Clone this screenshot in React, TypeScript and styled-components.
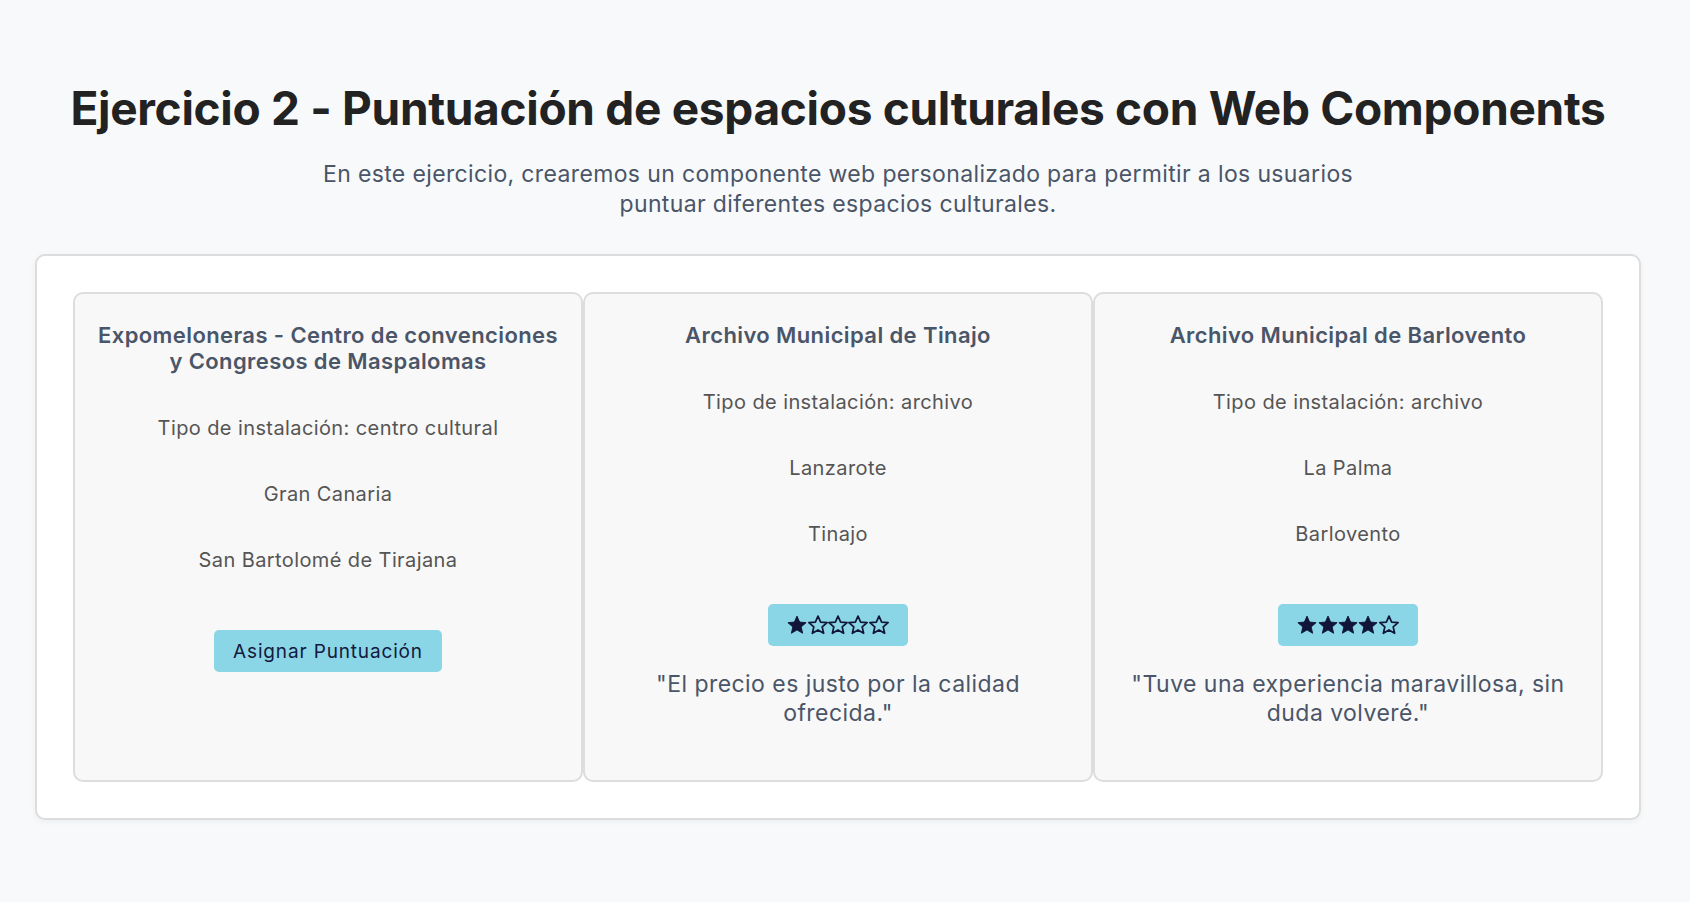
import { createGlobalStyle, styled } from "styled-components";

type Space = {
  name: string;
  type: string;
  island: string;
  town: string;
  rating?: number;
  comment?: string;
};

const spaces: Space[] = [
  {
    name: "Expomeloneras - Centro de convenciones y Congresos de Maspalomas",
    type: "centro cultural",
    island: "Gran Canaria",
    town: "San Bartolomé de Tirajana",
  },
  {
    name: "Archivo Municipal de Tinajo",
    type: "archivo",
    island: "Lanzarote",
    town: "Tinajo",
    rating: 1,
    comment: "El precio es justo por la calidad ofrecida.",
  },
  {
    name: "Archivo Municipal de Barlovento",
    type: "archivo",
    island: "La Palma",
    town: "Barlovento",
    rating: 4,
    comment: "Tuve una experiencia maravillosa, sin duda volveré.",
  },
];

function Star({ filled }: { filled: boolean }) {
  return (
    <StarSvg viewBox="1 1 22 22" width="20" height="20">
      <path
        d="M12 2.2l2.9 6.6 7.1.6-5.4 4.7 1.6 7-6.2-3.7-6.2 3.7 1.6-7L2 9.4l7.1-.6z"
        fill={filled ? "#111638" : "none"}
        stroke="#111638"
        strokeWidth={filled ? 1 : 1.9}
        strokeLinejoin="round"
      />
    </StarSvg>
  );
}

function Card({ space }: { space: Space }) {
  return (
    <CardBox>
      <CardTitle>{space.name}</CardTitle>
      <Details>
        <Detail>Tipo de instalación: {space.type}</Detail>
        <Detail>{space.island}</Detail>
        <Detail>{space.town}</Detail>
      </Details>
      {space.rating ? (
        <>
          <RateButton aria-label={`${space.rating} de 5`} $stars>
            {[1, 2, 3, 4, 5].map((n) => (
              <Star key={n} filled={n <= (space.rating ?? 0)} />
            ))}
          </RateButton>
          <Quote>"{space.comment}"</Quote>
        </>
      ) : (
        <RateButton>Asignar Puntuación</RateButton>
      )}
    </CardBox>
  );
}

export default function App() {
  return (
    <>
      <GlobalStyle />
      <Page>
        <Header>
          <Title>Ejercicio 2 - Puntuación de espacios culturales con Web Components</Title>
          <Intro>
            En este ejercicio, crearemos un componente web personalizado para permitir a los usuarios
            puntuar diferentes espacios culturales.
          </Intro>
        </Header>
        <Panel>
          {spaces.map((s) => (
            <Card key={s.name} space={s} />
          ))}
        </Panel>
      </Page>
    </>
  );
}

const GlobalStyle = createGlobalStyle`
  html, body {
    margin: 0;
    background: #f8f9fb;
    font-family: Inter, "Noto Sans", "Liberation Sans", sans-serif;
  }
  * {
    box-sizing: border-box;
  }
`;

const Page = styled.div`
  min-height: 902px;
  padding: 80px 49px 80px 35px;
`;

const Header = styled.header`
  display: flex;
  flex-direction: column;
  align-items: center;
  text-align: center;
`;

const Title = styled.h1`
  margin: 0;
  font-size: 46px;
  line-height: 56px;
  font-weight: 700;
  color: #222222;
  letter-spacing: -0.3px;
`;

const Intro = styled.p`
  margin: 23px 0 0;
  max-width: 1060px;
  font-size: 23px;
  line-height: 30px;
  letter-spacing: 0.36px;
  color: #4a5568;
`;

const Panel = styled.main`
  margin-top: 35px;
  display: grid;
  grid-template-columns: repeat(3, 1fr);
  padding: 36px;
  background: #ffffff;
  border: 2px solid #dddddd;
  border-radius: 10px;
  box-shadow: 0 2px 6px rgba(0, 0, 0, 0.05);
`;

const CardBox = styled.section`
  display: flex;
  flex-direction: column;
  align-items: center;
  text-align: center;
  min-height: 490px;
  padding: 28px 18px;
  background: #f8f8f8;
  border: 2px solid #dddddd;
  border-radius: 10px;
`;

const CardTitle = styled.h3`
  margin: 0;
  font-size: 22px;
  line-height: 26px;
  font-weight: 600;
  letter-spacing: 0.4px;
  color: #4a5568;
`;

const Details = styled.div`
  display: flex;
  flex-direction: column;
  gap: 38px;
  margin-top: 40px;
`;

const Detail = styled.p`
  margin: 0;
  font-size: 20px;
  line-height: 28px;
  letter-spacing: 0.4px;
  color: #555555;
`;

const RateButton = styled.button<{ $stars?: boolean }>`
  display: flex;
  align-items: center;
  gap: ${(p) => (p.$stars ? "0.3px" : "0")};
  margin-top: 56px;
  height: 42px;
  padding: 0 19px;
  border: none;
  border-radius: 5px;
  background: #8bd6e6;
  color: #14193d;
  font-family: inherit;
  font-size: 19px;
  letter-spacing: 0.85px;
  cursor: pointer;
`;

const StarSvg = styled.svg`
  display: block;
`;

const Quote = styled.p`
  margin: 24px 0 0;
  font-size: 23px;
  line-height: 29px;
  letter-spacing: 0.45px;
  color: #4a5568;
`;
